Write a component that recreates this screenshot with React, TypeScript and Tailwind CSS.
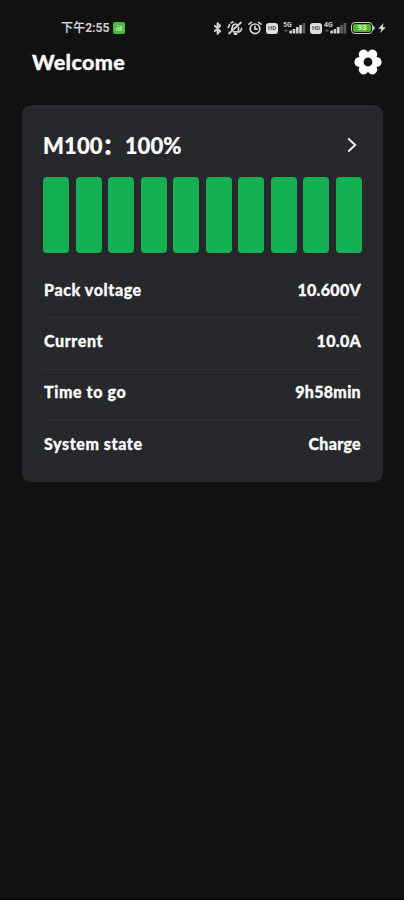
import { Bluetooth } from 'lucide-react'

const CELL_COUNT = 10

const stats = [
  { label: 'Pack voltage', value: '10.600V' },
  { label: 'Current', value: '10.0A' },
  { label: 'Time to go', value: '9h58min' },
  { label: 'System state', value: 'Charge' },
]

function GearIcon() {
  const lobes = [0, 60, 120, 180, 240, 300]
  return (
    <svg viewBox="-14 -14 28 28" className="w-7 h-7">
      {lobes.map(a => (
        <rect key={a} x={4} y={-4.8} width={9.5} height={9.6} rx={4.4} fill="#fdfdfd" transform={`rotate(${a})`} />
      ))}
      <circle r={7} fill="none" stroke="#fdfdfd" strokeWidth={6} />
      <circle r={4.4} fill="#111111" />
    </svg>
  )
}

function MutedBellIcon() {
  return (
    <svg viewBox="0 0 16 16" className="w-4 h-4" fill="none" stroke="#cfcfcf" strokeWidth={1.8} strokeLinecap="round" strokeLinejoin="round">
      <path d="M4.8 9.5 5.5 6.5a2.8 2.8 0 0 1 4.6-1.6M11.5 7.5v3.2l.8 1.1H6.5M7.5 14h2.2" />
      <path d="M2 13.5 14 2.5M1.3 7.5 2.5 4.8M14.6 8.5l-1 2.5M4.2 2.8 6 2" />
    </svg>
  )
}

function AlarmIcon() {
  return (
    <svg viewBox="0 0 14 14" className="w-3.5 h-3.5" fill="none" stroke="#d4d4d4" strokeWidth={1.7} strokeLinecap="round">
      <circle cx={7} cy={7.8} r={4.8} />
      <path d="M1 3.2 3.3 1.3M13 3.2 10.7 1.3M7 5.4v2.7h2" />
    </svg>
  )
}

function HdBadge() {
  return (
    <span className="flex h-[11px] w-3 items-center justify-center rounded-[3px] bg-[#dedede] text-[6px] font-bold leading-none text-[#555]">
      HD
    </span>
  )
}

function Signal({ network, bars }: { network: string; bars: number }) {
  return (
    <svg viewBox="0 0 23 14" className="h-3.5 w-[23px]">
      <text x={0} y={5.5} fontSize={7} fontWeight={700} fill="#cfcfcf">{network}</text>
      <path d="M1.5 9.5h3" stroke="#5a5a5a" strokeWidth={2} />
      {[3, 4.5, 6.5, 8.5, 10.5].map((h, i) => (
        <rect key={h} x={6.3 + i * 3.3} y={12.5 - h} width={2.7} height={h} rx={0.5} fill={i < bars ? '#cfcfcf' : '#5c5c5c'} />
      ))}
    </svg>
  )
}

function Battery() {
  return (
    <div className="flex items-center">
      <div className="flex h-3 w-[22px] items-center justify-center rounded-[4px] border-[1.5px] border-[#c9c9c9] p-px">
        <span className="flex h-full w-full items-center justify-center rounded-[2px] bg-[#51b52c] text-[8px] font-bold leading-none text-[#e3f7d8]">
          93
        </span>
      </div>
      <span className="h-1 w-0.5 rounded-r bg-[#b5b5b5]" />
    </div>
  )
}

function StatusBar() {
  return (
    <div className="flex h-[42px] items-center pt-3.5 pl-[61px] pr-[18px] font-['Roboto','Noto_Sans_CJK_SC',sans-serif]">
      <span className="w-[50px] whitespace-nowrap text-[12px] font-medium leading-none tracking-[0.15px] text-[#d6d6d6] [-webkit-text-stroke:0.2px_#d6d6d6]">
        下午2:55
      </span>
      <span className="ml-0.5 flex h-3 w-3 items-center justify-center rounded-[2px] bg-[#49bd43]">
        <svg viewBox="0 0 12 12" className="h-3 w-3" fill="none" stroke="#a5e69b" strokeWidth={1.2}>
          <path d="M3.5 9V6h2v3M7 9V4.5h1.5V9M4 3.5h2" />
        </svg>
      </span>
      <div className="ml-auto flex items-center">
        <Bluetooth className="h-[13px] w-[13px] text-[#d4d4d4]" strokeWidth={3.4} />
        <span className="ml-[3px]"><MutedBellIcon /></span>
        <span className="ml-[5px]"><AlarmIcon /></span>
        <span className="ml-[4px]"><HdBadge /></span>
        <span className="ml-[5px]"><Signal network="5G" bars={4} /></span>
        <span className="ml-[4px]"><HdBadge /></span>
        <span className="ml-[2px]"><Signal network="4G" bars={3} /></span>
        <span className="ml-[4px]"><Battery /></span>
        <svg viewBox="0 0 8 10" className="ml-[3px] h-2.5 w-2" fill="#dcdcdc">
          <path d="M5.5 0 .3 5.8h3L2.2 10 7.8 4.2H4.7z" />
        </svg>
      </div>
    </div>
  )
}

export default function App() {
  return (
    <div className="flex min-h-screen flex-col border-b-2 border-[#090709] bg-[#111111] font-['Lato','Noto_Sans_CJK_SC',sans-serif] text-[#fafafa]">
      <StatusBar />

      <header className="flex h-10 items-center justify-between pl-8 pr-[22px]">
        <h1 className="pt-0.5 text-[21.5px] font-black leading-none tracking-[0.35px] [-webkit-text-stroke:0.3px_#fafafa]">Welcome</h1>
        <button type="button" aria-label="Settings">
          <GearIcon />
        </button>
      </header>

      <main className="ml-[22px] mr-[21px] mt-[23px] h-[376.5px] rounded-[9px] bg-[#27282b] px-[21px]">
        <div className="flex h-[72px] items-center justify-between pt-2.5">
          <h2 className="text-[22px] font-black leading-none tracking-[0.1px] [-webkit-text-stroke:0.2px_#fafafa]">M100：100%</h2>
          <svg viewBox="0 0 10 16" className="mr-[5px] h-4 w-2.5 -translate-y-px" fill="none" stroke="#f2f2f2" strokeWidth={2}>
            <path d="M1.2 1.5 8.2 8 1.2 14.5" />
          </svg>
        </div>

        {/* Charge level, one block per 10% */}
        <div className="flex h-[76px] justify-between">
          {Array.from({ length: CELL_COUNT }, (_, i) => (
            <div key={i} className="w-[26px] rounded-[4px] bg-[#14b053]" />
          ))}
        </div>

        <dl className="mt-[14px] divide-y divide-[#303135]">
          {stats.map(({ label, value }) => (
            <div key={label} className="flex h-[51.3px] items-center justify-between pb-[4.5px] text-[16px] font-black leading-none [-webkit-text-stroke:0.3px_#fafafa]">
              <dt className="pl-px tracking-[0.6px]">{label}</dt>
              <dd className="pr-px tracking-[0.3px]">{value}</dd>
            </div>
          ))}
        </dl>
      </main>
    </div>
  )
}
